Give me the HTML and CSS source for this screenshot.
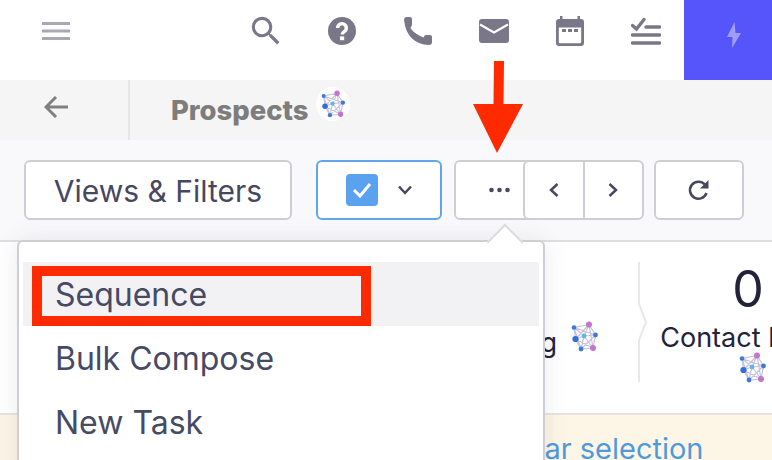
FILE: index.html
```html
<!DOCTYPE html>
<html lang="en">
<head>
<meta charset="utf-8">
<title>Prospects</title>
<link rel="stylesheet" href="styles.css">
</head>
<body>
<svg class="defs" width="0" height="0" aria-hidden="true">
  <symbol id="net" viewBox="0 0 28 31">
    <g fill="none" stroke="#c6c3da" stroke-width="1.2">
      <path d="M18 3.5 3 6.5 4.5 18 10 28 22 27 24.5 14ZM3 6.5 13 15 22 27M18 3.5 13 15 10 28M4.5 18 13 15 24.5 14M18 3.5 4.5 18M3 6.5 10 28M18 3.5 22 27M4.5 18 22 27M3 6.5 24.5 14M10 28 24.5 14"/>
    </g>
    <circle cx="18" cy="3.5" r="3" fill="#c474d0"/>
    <circle cx="3" cy="6.5" r="2.3" fill="#3f78dd"/>
    <circle cx="24.5" cy="14" r="2.4" fill="#3f78dd"/>
    <circle cx="13" cy="15" r="2.4" fill="#62b5e8"/>
    <circle cx="4.5" cy="18" r="3.1" fill="#2f6de0"/>
    <circle cx="10" cy="28" r="2.4" fill="#3f78dd"/>
    <circle cx="22" cy="27" r="3" fill="#c474d0"/>
  </symbol>
</svg>

<div class="page">
  <header class="topbar">
    <div class="menu-cell">
      <svg class="hamburger" width="28" height="18" viewBox="0 0 28 18"><path d="M0 1.500H28M0 9H28M0 16.500H28"/></svg>
    </div>
    <nav class="top-icons">
      <div class="top-icon">
        <svg width="38" height="38" viewBox="0 0 24 24"><path class="fill" d="M15.5 14h-.79l-.28-.27A6.471 6.471 0 0 0 16 9.5 6.5 6.5 0 1 0 9.5 16c1.61 0 3.09-.59 4.23-1.57l.27.28v.79l5 4.99L20.49 19l-4.99-5zm-6 0C7.01 14 5 11.99 5 9.5S7.01 5 9.5 5 14 7.01 14 9.5 11.99 14 9.5 14z"/></svg>
      </div>
      <div class="top-icon">
        <svg width="28" height="28" viewBox="0 0 28 28"><circle class="fill" cx="14" cy="14" r="14"/><path class="white-line" d="M9.7 11a4.3 4.3 0 1 1 6.6 3.600c-1.500 1-2.200 1.600-2.200 3"/><rect x="12" y="19.400" width="4.200" height="3.800" fill="#fff"/></svg>
      </div>
      <div class="top-icon">
        <svg width="28" height="28" viewBox="0 0 28 28"><path class="fill" d="M0 3Q0 0 3 0H6Q8 0 8 2V8L6.500 11Q10 17 20 20.500V20Q20 18 22 18H26Q28 18 28 20V25Q28 28 25 28Q3 27 0 3Z"/></svg>
      </div>
      <div class="top-icon">
        <svg width="30" height="24" viewBox="0 0 30 24"><rect class="fill" width="30" height="24" rx="3"/><path class="white-line thin" d="M1 5.500 15 13.500 29 5.500"/></svg>
      </div>
      <div class="top-icon">
        <svg width="28" height="30" viewBox="0 0 28 30"><path class="fill" d="M4 0h2.500v3h15V0H24v3h1a3 3 0 0 1 3 3v21a3 3 0 0 1-3 3H3a3 3 0 0 1-3-3V6a3 3 0 0 1 3-3h1zM2.800 11.500V26q0 1.200 1.200 1.200h20q1.200 0 1.200-1.200V11.500z"/><rect class="fill" x="6" y="13" width="4" height="3"/><rect class="fill" x="12" y="13" width="4" height="3"/><rect class="fill" x="18" y="13" width="4" height="3"/></svg>
      </div>
      <div class="top-icon">
        <svg width="30" height="28" viewBox="0 0 30 28"><path class="task-line" d="M1.500 8.500 5.500 12 13 2.500M15 10H28.500M1.500 18H28.500M1.500 26H28.500"/></svg>
      </div>
    </nav>
    <div class="bolt-cell">
      <svg width="14" height="26" viewBox="0 0 14 26"><path d="M7.500 0 0 15H5.500L5 26 14 11H8.500Z"/></svg>
    </div>
  </header>

  <div class="titlebar">
    <div class="back-cell">
      <svg width="24" height="22" viewBox="0 0 24 22"><path d="M24 11H2M12 1 2 11 12 21"/></svg>
    </div>
    <h1 class="title">Prospects</h1>
    <div class="title-badge"><svg class="net-sm"><use href="#net"/></svg></div>
  </div>

  <div class="toolbar">
    <button class="btn btn-views">Views &amp; Filters</button>
    <button class="btn btn-check">
      <span class="checkbox"><svg width="20" height="16" viewBox="0 0 20 16"><path d="M2 8 8 14 18 2"/></svg></span>
      <svg class="chev" width="16" height="10" viewBox="0 0 16 10"><path d="M2 1.500 8 8 14 1.500"/></svg>
    </button>
    <button class="btn btn-more"><svg width="21" height="6" viewBox="0 0 21 6"><circle cx="2.500" cy="3" r="2.300"/><circle cx="10.500" cy="3" r="2.300"/><circle cx="18.500" cy="3" r="2.300"/></svg></button>
    <div class="pager">
      <button class="pager-btn"><svg class="chev" width="10" height="16" viewBox="0 0 10 16"><path d="M8.500 2 2 8 8.500 14"/></svg></button>
      <button class="pager-btn"><svg class="chev" width="10" height="16" viewBox="0 0 10 16"><path d="M1.500 2 8 8 1.500 14"/></svg></button>
    </div>
    <button class="btn btn-refresh"><svg class="chev" width="22" height="22" viewBox="0 0 22 22"><path d="M18.500 14a8.500 8.500 0 1 1-1.700-8.500"/><path class="head" d="M20.500 1V9.500H12Z"/></svg></button>
  </div>

  <section class="stats">
    <div class="stat stat-left">
      <div class="stat-label">Prospecting <svg class="net-md"><use href="#net"/></svg></div>
    </div>
    <svg class="stat-divider" width="10" height="120" viewBox="0 0 10 120"><path d="M1 0V42L8 60 1 78V120"/></svg>
    <div class="stat stat-right">
      <div class="stat-num">0</div>
      <div class="stat-label stat-label-right">Contact Method</div>
      <svg class="net-md"><use href="#net"/></svg>
    </div>
  </section>

  <div class="banner"><a class="link">Clear selection</a></div>

  <div class="dropdown">
    <div class="dd-item active">Sequence</div>
    <div class="dd-item">Bulk Compose</div>
    <div class="dd-item">New Task</div>
  </div>

  <div class="note-box"></div>
  <svg class="note-arrow" width="50" height="92" viewBox="0 0 50 92"><path d="M21 0H31L30.500 43H50L24 92 0 43H20.500Z"/></svg>
</div>
</body>
</html>
```
FILE: styles.css
```css
* { box-sizing: border-box; }
html, body { margin: 0; padding: 0; }
body {
  width: 772px;
  height: 460px;
  overflow: hidden;
  background: #fff;
  font-family: "Inter", "Liberation Sans", sans-serif;
}
.defs { display: block; height: 0; }
.page { position: relative; width: 772px; height: 460px; overflow: hidden; }

.topbar { display: flex; height: 80px; background: #fff; }
.menu-cell { width: 228px; padding: 22px 0 0 42px; }
.hamburger { display: block; fill: none; stroke: #a9a8b3; stroke-width: 3; }
.top-icons { display: flex; width: 456px; }
.top-icon { width: 76px; height: 62px; display: flex; align-items: center; justify-content: center; }
.fill { fill: #7a7788; }
.white-line { fill: none; stroke: #fff; stroke-width: 3.4; }
.white-line.thin { stroke-width: 2.2; }
.task-line { fill: none; stroke: #7a7788; stroke-width: 3.4; stroke-linecap: round; }
.bolt-cell { width: 88px; background: #5655fb; display: flex; justify-content: center; padding: 22px 0 0 12px; }
.bolt-cell svg { fill: #a29cf9; }

.titlebar { display: flex; align-items: center; height: 60px; background: #f5f5f5; }
.back-cell { width: 130px; height: 60px; border-right: 2px solid #e6e6e6; padding: 16px 0 0 44px; }
.back-cell svg { display: block; fill: none; stroke: #808080; stroke-width: 3; }
.title { margin: 0 0 0 41px; font-size: 27.4px; line-height: 60px; font-weight: 800; color: #7d7d7d; white-space: nowrap; }
.title-badge {
  width: 34px; height: 34px; margin: -13px 0 0 8px;
  border-radius: 50%; background: #fff;
  display: flex; align-items: center; justify-content: center;
}
.net-sm { width: 25px; height: 28px; display: block; }
.net-md { width: 28px; height: 31px; }

.toolbar {
  display: flex; align-items: flex-start;
  height: 102px; padding: 20px 0 0 24px;
  background: #f9f9fb; border-bottom: 2px solid #dfdfe3;
}
.btn {
  height: 60px; padding: 0; font-family: inherit;
  background: #fff; border: 2px solid #cfced5; border-radius: 6px;
  display: flex; align-items: center; justify-content: center;
}
.btn-views { width: 268px; padding-top: 2px; font-size: 30px; color: #47475f; }
.btn-check { width: 126px; margin-left: 24px; border-color: #62a6ea; gap: 19px; }
.checkbox { width: 32px; height: 32px; border-radius: 4px; background: #5aa2ef; display: flex; align-items: center; justify-content: center; }
.checkbox svg { fill: none; stroke: #fff; stroke-width: 3; }
.chev { fill: none; stroke: #47475f; stroke-width: 2.500; }
.chev .head { fill: #47475f; stroke: none; }
.btn-more { width: 90px; margin: 0 -21px 0 12px; }
.btn-more svg { fill: #47475f; }
.pager { position: relative; display: flex; width: 121px; height: 60px; background: #fff; border: 2px solid #cfced5; border-radius: 6px; }
.pager-btn { flex: 1; padding: 0; background: none; border: 0; display: flex; align-items: center; justify-content: center; }
.pager-btn + .pager-btn { border-left: 2px solid #cfced5; }
.btn-refresh { width: 90px; margin-left: 10px; }

.stats { display: flex; height: 171px; background: #fff; padding-top: 20px; overflow: hidden; }
.stat { width: 228px; flex: none; text-align: center; color: #22223a; }
.stat-left { margin-left: 404px; padding-top: 59px; text-align: left; }
.stat-label { font-size: 27px; line-height: 34px; white-space: nowrap; }
.stat-label-right { padding: 5px 0 0 20px; }
.stat-label .net-md { margin-left: 6px; }
.stat-divider { flex: none; width: 10px; margin-left: 6px; fill: none; stroke: #e8e8ec; stroke-width: 2; }
.stat-right { margin-left: -9px; }
.stat-right .net-md { margin-top: -3px; }
.stat-num { font-size: 50px; line-height: 54px; padding-right: 10px; }

.banner {
  height: 47px; padding: 14px 0 0 499px;
  background: #fdf6e7; border-top: 2px solid #e6e3e0;
}
.link { font-size: 29px; line-height: 40px; color: #4f9ad9; white-space: nowrap; }

.dropdown {
  position: absolute; left: 17px; top: 240px; width: 528px; height: 240px;
  padding: 20px 4px 0;
  background: #fff; border: 2px solid #cfced5; border-radius: 6px;
  box-shadow: 0 0 24px rgba(60, 60, 90, .1);
}
.dropdown::before {
  content: ""; position: absolute; left: 473px; top: -13px; width: 24px; height: 24px;
  background: #fff; border: 2px solid #dcdbe0; border-right: 0; border-bottom: 0;
  transform: rotate(45deg);
}
.dd-item { height: 64px; padding-left: 32px; font-size: 32px; line-height: 66px; color: #474a63; }
.dd-item.active { background: #f2f2f5; }

.note-box { position: absolute; left: 32px; top: 266px; width: 339px; height: 60px; border: 10px solid #ff2a00; }
.note-arrow { position: absolute; left: 473px; top: 61px; fill: #ff2a00; }
```
